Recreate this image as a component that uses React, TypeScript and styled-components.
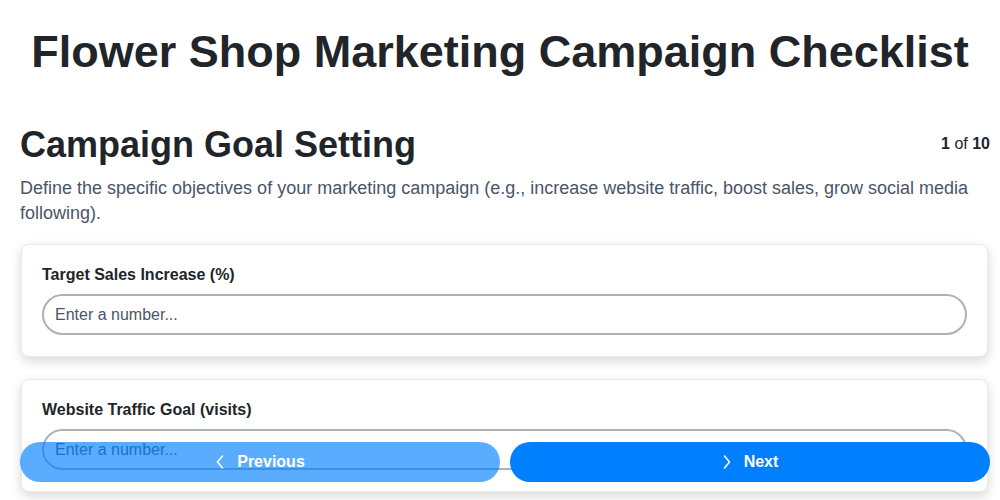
import React from "react";
import styled, { createGlobalStyle } from "styled-components";

const GlobalStyle = createGlobalStyle`
  html, body {
    margin: 0;
    height: 100%;
    overflow: hidden;
  }
  body {
    background: #ffffff;
    font-family: "Liberation Sans", Arial, sans-serif;
    color: #212529;
  }
`;

const Page = styled.div`
  height: 100vh;
  overflow-y: auto;
  scrollbar-width: none;
  box-sizing: border-box;
  padding: 0 10px 90px 20px;
  &::-webkit-scrollbar {
    display: none;
  }
`;

const Title = styled.h1`
  font-size: 45px;
  font-weight: 700;
  text-align: center;
  margin: 26px -10px 46px -20px;
  line-height: 1.15;
`;

const StepHeader = styled.div`
  display: flex;
  justify-content: space-between;
  align-items: center;
`;

const StepTitle = styled.h2`
  font-size: 36px;
  font-weight: 700;
  margin: 0;
  line-height: 1.15;
`;

const Counter = styled.span`
  font-size: 16px;
  color: #212529;
  b {
    font-weight: 700;
  }
`;

const Description = styled.p`
  font-size: 18px;
  line-height: 25px;
  color: #4a5568;
  margin: 11px 0 18px;
`;

const Card = styled.div`
  background: #ffffff;
  border: 1px solid #e9e9ee;
  border-radius: 8px;
  box-shadow: 0 4px 12px rgba(0, 0, 0, 0.16);
  padding: 21px 20px 21px;
  margin: 0 2px 22px 1px;
`;

const Label = styled.label`
  display: block;
  font-size: 16px;
  font-weight: 700;
  color: #212529;
  margin-bottom: 10px;
`;

const Input = styled.input`
  box-sizing: border-box;
  width: 100%;
  height: 41px;
  padding: 0 11px;
  border: 2px solid #a9b1ba;
  border-radius: 999px;
  font-family: "Liberation Sans", Arial, sans-serif;
  font-size: 16px;
  color: #212529;
  background: #ffffff;
  outline: none;
  &::placeholder {
    color: #4a5568;
  }
`;

const NavBar = styled.div`
  position: fixed;
  left: 20px;
  right: 10px;
  bottom: 18px;
  display: flex;
  gap: 10px;
`;

const NavButton = styled.button<{ $faded?: boolean }>`
  flex: 1;
  height: 40px;
  border: none;
  border-radius: 999px;
  background: #0080ff;
  opacity: ${(p) => (p.$faded ? 0.65 : 1)};
  color: #ffffff;
  font-family: "Liberation Sans", Arial, sans-serif;
  font-size: 16px;
  font-weight: 700;
  display: flex;
  align-items: center;
  justify-content: center;
  gap: 12px;
  cursor: pointer;
`;

const Chevron = ({ dir }: { dir: "left" | "right" }) => (
  <svg width="10" height="14" viewBox="0 0 10 14" fill="none">
    <polyline
      points={dir === "left" ? "7.5,1 2.5,7 7.5,13" : "2.5,1 7.5,7 2.5,13"}
      stroke="currentColor"
      strokeWidth="1.6"
      strokeLinecap="round"
      strokeLinejoin="round"
    />
  </svg>
);

const fields = [
  { id: "sales", label: "Target Sales Increase (%)" },
  { id: "traffic", label: "Website Traffic Goal (visits)" },
];

export default function App() {
  return (
    <>
      <GlobalStyle />
      <Page>
        <Title>Flower Shop Marketing Campaign Checklist</Title>
        <StepHeader>
          <StepTitle>Campaign Goal Setting</StepTitle>
          <Counter>
            <b>1</b> of <b>10</b>
          </Counter>
        </StepHeader>
        <Description>
          Define the specific objectives of your marketing campaign (e.g.,
          increase website traffic, boost sales, grow social media following).
        </Description>
        {fields.map((f) => (
          <Card key={f.id}>
            <Label htmlFor={f.id}>{f.label}</Label>
            <Input id={f.id} type="number" placeholder="Enter a number..." />
          </Card>
        ))}
      </Page>
      <NavBar>
        <NavButton $faded>
          <Chevron dir="left" />
          Previous
        </NavButton>
        <NavButton>
          <Chevron dir="right" />
          Next
        </NavButton>
      </NavBar>
    </>
  );
}
